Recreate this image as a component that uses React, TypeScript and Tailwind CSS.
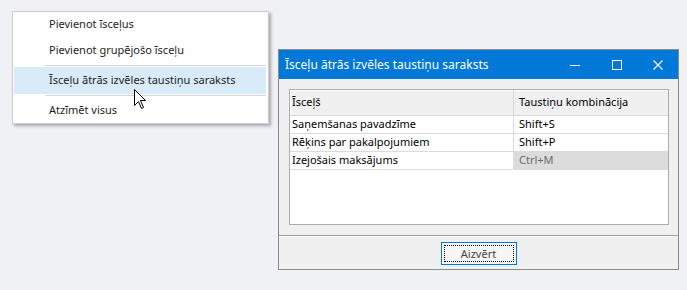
const rows = [
  { name: "Saņemšanas pavadzīme", keys: "Shift+S", disabled: false },
  { name: "Rēķins par pakalpojumiem", keys: "Shift+P", disabled: false },
  { name: "Izejošais maksājums", keys: "Ctrl+M", disabled: true },
];

function ContextMenu() {
  return (
    <div className="absolute left-[12px] top-[11px] w-[257px] h-[113px] bg-white border border-[#cccccc] shadow-[2px_2px_3px_rgba(0,0,0,0.3)] text-[#1e1e1e]">
      <div className="h-[25px] flex items-center pl-[36px]">Pievienot īsceļus</div>
      <div className="h-[27px] flex items-center pl-[36px]">Pievienot grupējošo īsceļu</div>
      <div className="h-[1px] ml-[32px] mr-[2px] mt-[1px] bg-[#d7d7d7]" />
      <div className="h-[27px] flex items-center pl-[35px] ml-[1px] mr-[2px] mt-[1px] bg-[#d9ebf9]">
        Īsceļu ātrās izvēles taustiņu saraksts
      </div>
      <div className="h-[1px] ml-[32px] mr-[2px] mt-[1px] bg-[#d7d7d7]" />
      <div className="h-[26px] flex items-center pl-[36px] mt-[1px]">Atzīmēt visus</div>
    </div>
  );
}

function Cursor() {
  return (
    <svg className="absolute left-[134px] top-[89px]" width="13" height="21" viewBox="0 0 13 21">
      <path
        d="M0.5 0.5 L0.5 16.5 L4.5 12.5 L7.5 19.5 L9.5 18.5 L6.5 11.5 L11.5 11.5 Z"
        fill="white"
        stroke="black"
        strokeWidth="1"
      />
    </svg>
  );
}

function ShortcutDialog() {
  return (
    <div className="absolute left-[278px] top-[49px] w-[401px] h-[221px] border border-[#8a8a8a] bg-[#f0f0f0] flex flex-col">
      {/* Virsraksta josla */}
      <div className="h-[29px] bg-[#0078d7] flex items-center text-white shrink-0">
        <span className="pl-[6px] text-[12px] flex-1">Īsceļu ātrās izvēles taustiņu saraksts</span>
        <div className="w-[42px] h-full flex items-center justify-center">
          <svg width="10" height="10" viewBox="0 0 10 10">
            <path d="M0 5.5 H10" stroke="white" strokeWidth="1" />
          </svg>
        </div>
        <div className="w-[42px] h-full flex items-center justify-center">
          <svg width="10" height="10" viewBox="0 0 10 10">
            <rect x="0.5" y="0.5" width="9" height="9" fill="none" stroke="white" strokeWidth="1" />
          </svg>
        </div>
        <div className="w-[40px] h-full flex items-center justify-center">
          <svg width="10" height="10" viewBox="0 0 10 10">
            <path d="M0.5 0.5 L9.5 9.5 M9.5 0.5 L0.5 9.5" stroke="white" strokeWidth="1.1" />
          </svg>
        </div>
      </div>

      {/* Tabula */}
      <div className="px-[10px] pr-[9px] pt-[10px]">
        <div className="h-[136px] bg-white border border-[#acacac]">
          <div className="flex h-[26px] bg-[#f0f0f0] border-b border-[#d8d8d8] shadow-[inset_1px_1px_0_#ffffff]">
            <div className="w-[224px] flex items-center pl-[2px] border-r border-[#d8d8d8]">Īsceļš</div>
            <div className="flex-1 flex items-center pl-[5px]">Taustiņu kombinācija</div>
          </div>
          {rows.map((r) => (
            <div key={r.name} className="flex h-[18px] border-b border-[#dcdcdc]">
              <div className="w-[224px] flex items-center pl-[2px] border-r border-[#dcdcdc] text-black">{r.name}</div>
              <div
                className={
                  r.disabled
                    ? "flex-1 flex items-center pl-[5px] bg-[#dcdcdc] text-[#6d6d6d]"
                    : "flex-1 flex items-center pl-[5px] text-black"
                }
              >
                {r.keys}
              </div>
            </div>
          ))}
        </div>
      </div>

      {/* Kājene */}
      <div className="mt-[10px] h-[1px] bg-[#a0a0a0]" />
      <div className="h-[1px] bg-white" />
      <div className="flex-1 flex justify-center pt-[5px]">
        <button className="w-[76px] h-[23px] border border-[#0078d7] bg-[#f6f6f6] p-[2px]">
          <div className="w-full h-full border border-dotted border-black flex items-center justify-center text-[#444] leading-none">
            Aizvērt
          </div>
        </button>
      </div>
    </div>
  );
}

export default function App() {
  return (
    <div className="relative w-[687px] h-[290px] bg-[#f0f1f5] overflow-hidden font-['Noto_Sans',_sans-serif] text-[11px]">
      <ContextMenu />
      <Cursor />
      <ShortcutDialog />
    </div>
  );
}
